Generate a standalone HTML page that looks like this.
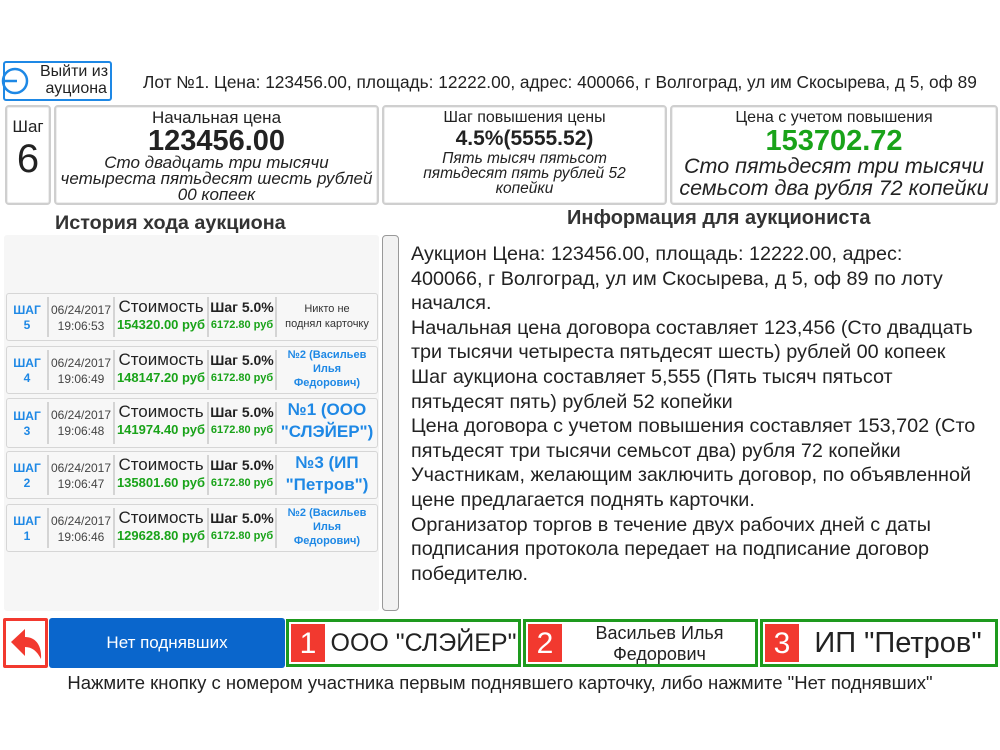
<!DOCTYPE html>
<html><head><meta charset="utf-8"><style>
*{box-sizing:border-box;margin:0;padding:0}
body{width:1000px;height:750px;background:#fff;font-family:"Liberation Sans",sans-serif;color:#222;position:relative;overflow:hidden}
.a{position:absolute}
.n{font-family:"Liberation Sans Narrow","Liberation Sans",sans-serif}
.box{position:absolute;border:2px solid #cfcfcf;border-radius:4px;background:#fff;text-align:center;box-shadow:inset 0 0 0 1px #eee}
.row{position:absolute;left:6px;width:372px;height:48px;border:1px solid #d6d6d6;border-radius:3px;background:#f7f7f7}
.row .c{position:absolute;top:3px;bottom:3px;border-right:2px solid #d4d4d4;text-align:center}
.blue{color:#1e88e5}
.green{color:#19a319}
.pb{position:absolute;top:619px;height:48px;border:3px solid #1e9a1e;background:#fff}
.num{position:absolute;left:2px;top:2px;width:34px;height:38px;background:#f2392f;color:#fff;font-size:30px;line-height:40px;text-align:center}
.line{white-space:nowrap}
</style></head><body>

<div class="a" style="left:3px;top:61px;width:109px;height:40px;border:2px solid #1e88e5;border-radius:3px"></div>
<svg class="a" style="left:0;top:65px" width="32" height="32" viewBox="0 0 32 32"><circle cx="15" cy="16" r="12" fill="none" stroke="#1e88e5" stroke-width="2.5"/><line x1="2" y1="16" x2="17" y2="16" stroke="#1e88e5" stroke-width="2.5"/></svg>
<div class="a" style="left:34px;top:63px;width:80px;text-align:center;font-size:16px;line-height:17px">Выйти из<br>&nbsp;ауциона</div>
<div class="a line" style="left:143px;top:72px;font-size:17.3px">Лот №1. Цена: 123456.00, площадь: 12222.00, адрес: 400066, г Волгоград, ул им Скосырева, д 5, оф 89</div>

<div class="box" style="left:5px;top:105px;width:46px;height:100px"><div style="font-size:17px;margin-top:10px">Шаг</div><div style="font-size:40px;line-height:44px">6</div></div>
<div class="box" style="left:54px;top:105px;width:325px;height:100px"><div style="font-size:17px;line-height:18px;margin-top:2px">Начальная цена</div><div style="font-size:29px;font-weight:bold;line-height:28px">123456.00</div><div class="n" style="font-size:17px;font-style:italic;line-height:16px">Сто двадцать три тысячи<br>четыреста пятьдесят шесть рублей<br>00 копеек</div></div>
<div class="box" style="left:382px;top:105px;width:285px;height:100px"><div class="n" style="font-size:16px;line-height:18px;margin-top:2px">Шаг повышения цены</div><div style="font-size:21px;font-weight:bold;line-height:24px">4.5%(5555.52)</div><div class="n" style="font-size:15.5px;font-style:italic;line-height:15px">Пять тысяч пятьсот<br>пятьдесят пять рублей 52<br>копейки</div></div>
<div class="box" style="left:670px;top:105px;width:328px;height:100px"><div class="n" style="font-size:16px;line-height:18px;margin-top:2px">Цена с учетом повышения</div><div class="green" style="font-size:29px;font-weight:bold;line-height:28px">153702.72</div><div class="n" style="font-size:21.5px;font-style:italic;line-height:22px">Сто пятьдесят три тысячи<br>семьсот два рубля 72 копейки</div></div>

<div class="a line" style="left:55px;top:212px;font-size:19.8px;font-weight:bold;color:#333">История хода аукциона</div>
<div class="a line" style="left:567px;top:207px;font-size:20px;font-weight:bold;color:#333">Информация для аукциониста</div>

<div class="a" style="left:4px;top:235px;width:375px;height:376px;background:#f6f6f6;border-radius:3px"></div>
<div class="a" style="left:382px;top:235px;width:17px;height:376px;border:1px solid #999;border-radius:4px;background:#f2f2f2"></div>

<div class="row" style="top:293px">
<div class="c blue" style="left:0;width:40px;font-size:12px;font-weight:bold;line-height:15px;padding-top:6px;border:none">ШАГ<br>5</div>
<div class="c" style="left:40px;width:68px;font-size:12px;line-height:16px;padding-top:5px;border-left:2px solid #d4d4d4;color:#444">06/24/2017<br>19:06:53</div>
<div class="c" style="left:108px;width:94px"><div class="n" style="font-size:17px;line-height:20px">Стоимость</div><div class="green n" style="font-size:13px;font-weight:bold">154320.00 руб</div></div>
<div class="c" style="left:202px;width:68px"><div class="n" style="font-size:14px;font-weight:bold;line-height:20px">Шаг 5.0%</div><div class="green n" style="font-size:11px;font-weight:bold;line-height:16px">6172.80 руб</div></div>
<div class="c" style="left:270px;width:100px;border:none;font-size:11px;line-height:15px;padding-top:5px;color:#333">Никто не<br>поднял карточку</div>
</div>
<div class="row" style="top:346px">
<div class="c blue" style="left:0;width:40px;font-size:12px;font-weight:bold;line-height:15px;padding-top:6px;border:none">ШАГ<br>4</div>
<div class="c" style="left:40px;width:68px;font-size:12px;line-height:16px;padding-top:5px;border-left:2px solid #d4d4d4;color:#444">06/24/2017<br>19:06:49</div>
<div class="c" style="left:108px;width:94px"><div class="n" style="font-size:17px;line-height:20px">Стоимость</div><div class="green n" style="font-size:13px;font-weight:bold">148147.20 руб</div></div>
<div class="c" style="left:202px;width:68px"><div class="n" style="font-size:14px;font-weight:bold;line-height:20px">Шаг 5.0%</div><div class="green n" style="font-size:11px;font-weight:bold;line-height:16px">6172.80 руб</div></div>
<div class="c blue" style="left:270px;width:100px;border:none;font-size:11px;font-weight:bold;line-height:14px;top:1px">№2 (Васильев<br>Илья<br>Федорович)</div>
</div>
<div class="row" style="top:398px;height:50px">
<div class="c blue" style="left:0;width:40px;font-size:12px;font-weight:bold;line-height:15px;padding-top:7px;border:none">ШАГ<br>3</div>
<div class="c" style="left:40px;width:68px;font-size:12px;line-height:16px;padding-top:5px;border-left:2px solid #d4d4d4;color:#444">06/24/2017<br>19:06:48</div>
<div class="c" style="left:108px;width:94px"><div class="n" style="font-size:17px;line-height:20px">Стоимость</div><div class="green n" style="font-size:13px;font-weight:bold">141974.40 руб</div></div>
<div class="c" style="left:202px;width:68px"><div class="n" style="font-size:14px;font-weight:bold;line-height:20px">Шаг 5.0%</div><div class="green n" style="font-size:11px;font-weight:bold;line-height:16px">6172.80 руб</div></div>
<div class="c blue" style="left:270px;width:100px;border:none;font-size:17px;font-weight:bold;line-height:22px;top:0">№1 (ООО<br>"СЛЭЙЕР")</div>
</div>
<div class="row" style="top:451px">
<div class="c blue" style="left:0;width:40px;font-size:12px;font-weight:bold;line-height:15px;padding-top:6px;border:none">ШАГ<br>2</div>
<div class="c" style="left:40px;width:68px;font-size:12px;line-height:16px;padding-top:5px;border-left:2px solid #d4d4d4;color:#444">06/24/2017<br>19:06:47</div>
<div class="c" style="left:108px;width:94px"><div class="n" style="font-size:17px;line-height:20px">Стоимость</div><div class="green n" style="font-size:13px;font-weight:bold">135801.60 руб</div></div>
<div class="c" style="left:202px;width:68px"><div class="n" style="font-size:14px;font-weight:bold;line-height:20px">Шаг 5.0%</div><div class="green n" style="font-size:11px;font-weight:bold;line-height:16px">6172.80 руб</div></div>
<div class="c blue" style="left:270px;width:100px;border:none;font-size:17px;font-weight:bold;line-height:22px;top:0">№3 (ИП<br>"Петров")</div>
</div>
<div class="row" style="top:504px">
<div class="c blue" style="left:0;width:40px;font-size:12px;font-weight:bold;line-height:15px;padding-top:6px;border:none">ШАГ<br>1</div>
<div class="c" style="left:40px;width:68px;font-size:12px;line-height:16px;padding-top:5px;border-left:2px solid #d4d4d4;color:#444">06/24/2017<br>19:06:46</div>
<div class="c" style="left:108px;width:94px"><div class="n" style="font-size:17px;line-height:20px">Стоимость</div><div class="green n" style="font-size:13px;font-weight:bold">129628.80 руб</div></div>
<div class="c" style="left:202px;width:68px"><div class="n" style="font-size:14px;font-weight:bold;line-height:20px">Шаг 5.0%</div><div class="green n" style="font-size:11px;font-weight:bold;line-height:16px">6172.80 руб</div></div>
<div class="c blue" style="left:270px;width:100px;border:none;font-size:11px;font-weight:bold;line-height:14px;top:1px">№2 (Васильев<br>Илья<br>Федорович)</div>
</div>

<div class="a line" style="left:411px;top:242px;font-size:19.8px;line-height:24.6px;color:#222">
Аукцион Цена: 123456.00, площадь: 12222.00, адрес:<br>
400066, г Волгоград, ул им Скосырева, д 5, оф 89 по лоту<br>
начался.<br>
Начальная цена договора составляет 123,456 (Сто двадцать<br>
три тысячи четыреста пятьдесят шесть) рублей 00 копеек<br>
Шаг аукциона составляет 5,555 (Пять тысяч пятьсот<br>
пятьдесят пять) рублей 52 копейки<br>
Цена договора с учетом повышения составляет 153,702 (Сто<br>
пятьдесят три тысячи семьсот два) рубля 72 копейки<br>
Участникам, желающим заключить договор, по объявленной<br>
цене предлагается поднять карточки.<br>
Организатор торгов в течение двух рабочих дней с даты<br>
подписания протокола передает на подписание договор<br>
победителю.</div>

<div class="a" style="left:3px;top:618px;width:45px;height:50px;border:3px solid #f2392f;border-radius:2px;background:#fff"></div>
<svg class="a" style="left:8px;top:626px" width="36" height="36" viewBox="0 0 36 36"><path d="M3 16 L17 3 L17 11 C28 11 34 20 33 33 C29 25 24 21 17 21 L17 30 Z" fill="#f2392f"/></svg>
<div class="a" style="left:49px;top:618px;width:236px;height:50px;background:#0a66cc;border-radius:3px;color:#fff;font-size:17px;line-height:50px;text-align:center">Нет поднявших</div>

<div class="pb" style="left:286px;width:235px"><div class="num">1</div><div class="a" style="left:40px;right:0;top:0;bottom:0;text-align:center;font-size:25px;line-height:42px">ООО "СЛЭЙЕР"</div></div>
<div class="pb" style="left:523px;width:235px"><div class="num">2</div><div class="a" style="left:38px;right:0;top:1px;text-align:center;font-size:18px;line-height:21px">Васильев Илья<br>Федорович</div></div>
<div class="pb" style="left:760px;width:238px"><div class="num">3</div><div class="a" style="left:38px;right:0;top:0;bottom:0;text-align:center;font-size:29px;line-height:42px">ИП "Петров"</div></div>

<div class="a line" style="left:0;width:1000px;top:672px;text-align:center;font-size:18.5px">Нажмите кнопку с номером участника первым поднявшего карточку, либо нажмите "Нет поднявших"</div>
</body></html>
